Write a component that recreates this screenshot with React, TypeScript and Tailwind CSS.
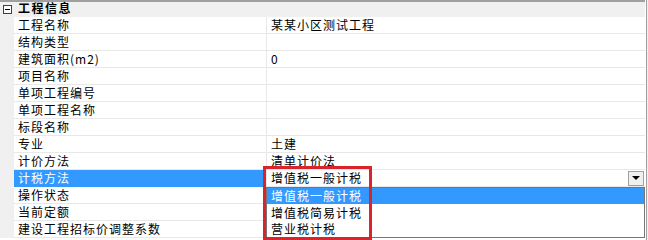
import React from "react";

const rows: { label: string; value?: string; selected?: boolean }[] = [
  { label: "工程名称", value: "某某小区测试工程" },
  { label: "结构类型" },
  { label: "建筑面积(m2)", value: "0" },
  { label: "项目名称" },
  { label: "单项工程编号" },
  { label: "单项工程名称" },
  { label: "标段名称" },
  { label: "专业", value: "土建" },
  { label: "计价方法", value: "清单计价法" },
  { label: "计税方法", selected: true },
  { label: "操作状态" },
  { label: "当前定额" },
  { label: "建设工程招标价调整系数" },
];

const font = { fontFamily: '"Noto Sans CJK SC", "Noto Sans", sans-serif' };

export default function App() {
  return (
    <div
      className="relative w-[648px] h-[240px] overflow-hidden bg-white text-[12px] tracking-[1px] text-black"
      style={font}
    >
      <div className="flex h-full">
        <div className="flex w-[645px] flex-col">
          {/* header */}
          <div className="flex h-[17px] items-center border-t-2 border-[#a0a0a0] bg-[#f0f0f0]">
            <div className="flex w-[15px] justify-center">
              <div className="flex h-[9px] w-[9px] items-center justify-center border border-[#404040] bg-white">
                <div className="h-px w-[5px] bg-black" />
              </div>
            </div>
            <span className="mb-[3px] ml-[3px] text-[12px] font-bold leading-[12px] tracking-[1.5px]">工程信息</span>
          </div>
          {rows.map((r) => (
            <div key={r.label} className="flex h-[17px]">
              <div className="w-[14px] bg-[#f0f0f0]" />
              <div
                className={
                  r.selected
                    ? "flex w-[252px] items-center overflow-hidden whitespace-nowrap border-b border-[#3399ff] bg-[#3399ff] pl-[4px] leading-[14px] text-white"
                    : "flex w-[252px] items-center overflow-hidden whitespace-nowrap border-b border-[#e8e8e8] pl-[4px] leading-[14px]"
                }
              >
                {r.label}
              </div>
              <div className="flex flex-1 items-center overflow-hidden whitespace-nowrap border-b border-l border-[#e8e8e8] pl-[4px] leading-[14px]">
                {r.selected ? (
                  <div className="flex h-full w-full items-center justify-between">
                    <span>增值税一般计税</span>
                    <div className="mr-[1px] flex h-[15px] w-[16px] items-center justify-center border border-[#a0a0a0] bg-[#f0f0f0]">
                      <div className="h-0 w-0 border-x-[4px] border-t-[4px] border-x-transparent border-t-black" />
                    </div>
                  </div>
                ) : (
                  r.value
                )}
              </div>
            </div>
          ))}
        </div>
        <div className="w-[1px] bg-white" />
        <div className="w-[1px] bg-[#a0a0a0]" />
        <div className="flex-1 bg-[#f0f0f0]" />
      </div>

      {/* dropdown list */}
      <div className="absolute left-[266px] top-[187px] flex h-[51px] w-[379px] flex-col border border-[#767676] bg-white">
        <div className="flex h-[16px] items-center overflow-hidden bg-[#3399ff] pl-[4px] leading-[14px] text-white">增值税一般计税</div>
        <div className="flex h-[17px] items-center overflow-hidden pl-[4px] leading-[14px]">增值税简易计税</div>
        <div className="flex h-[16px] items-center overflow-hidden pl-[4px] leading-[14px]">营业税计税</div>
      </div>

      {/* red annotation */}
      <div className="absolute left-[263px] top-[166px] h-[74px] w-[109px] border-[3px] border-[#d9232d]" />
    </div>
  );
}
